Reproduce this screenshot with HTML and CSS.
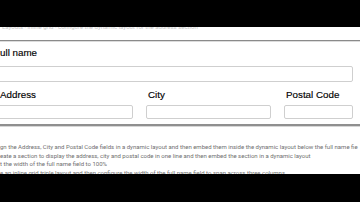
FILE: index.html
```html
<!DOCTYPE html>
<html lang="en">
<head>
  <meta charset="UTF-8">
  <meta name="viewport" content="width=device-width, initial-scale=1.0">
  <title>Dynamic layout</title>
  <link rel="stylesheet" href="styles.css">
</head>
<body>
  <div class="topbar"></div>
  <div class="crumb"><span>Layouts &middot; inline grid &middot; configure the dynamic layout for the address section</span></div>

  <div class="panel">
    <div class="field">
      <label class="label">ull name</label>
      <div class="input input-wide"></div>
    </div>

    <div class="triple">
      <div class="field">
        <label class="label">Address</label>
        <div class="input"></div>
      </div>
      <div class="field">
        <label class="label">City</label>
        <div class="input"></div>
      </div>
      <div class="field">
        <label class="label">Postal Code</label>
        <div class="input"></div>
      </div>
    </div>
  </div>

  <div class="notes">
    <p>gn the Address, City and Postal Code fields in a dynamic layout and then embed them inside the dynamic layout below the full name fie</p>
    <p>eate a section to display the address, city and postal code in one line and then embed the section in a dynamic layout</p>
    <p>t the width of the full name field to 100%</p>
    <p>e an inline grid triple layout and then configure the width of the full name field to span across three columns</p>
  </div>

  <div class="bottombar"></div>
</body>
</html>
```

FILE: styles.css
```css
* {
  box-sizing: border-box;
}

html, body {
  margin: 0;
  width: 360px;
  height: 202px;
  overflow: hidden;
  background: #fff;
}

body {
  display: flex;
  flex-direction: column;
  font-family: "Liberation Sans", Arial, sans-serif;
  color: #111;
}

.topbar {
  flex-shrink: 0;
  height: 27px;
  background: #000;
}

.crumb {
  flex-shrink: 0;
  height: 5px;
  overflow: hidden;
  padding-left: 2px;
}

.crumb span {
  display: block;
  margin-top: -4px;
  font-family: Roboto, sans-serif;
  font-size: 6px;
  line-height: 8px;
  color: #c8c8c8;
  white-space: nowrap;
}

.panel {
  flex-shrink: 0;
  margin-top: 8px;
  border-top: 1px solid #8a8a8a;
  border-bottom: 2px solid #8f8f8f;
  box-shadow: 0 1px 0 #d6d6d6, inset 0 1px 0 #dcdcdc;
  padding: 6px 0 5px;
}

.label {
  display: block;
  font-size: 9.8px;
  line-height: 12px;
  color: #000;
  white-space: nowrap;
  -webkit-text-stroke: 0.15px #000;
}

.input {
  height: 15px;
  border: 1px solid #cfcfcf;
  border-radius: 2px;
  background: #fff;
}

.input-wide {
  margin-top: 7px;
  margin-left: -4px;
  width: 357px;
  height: 16px;
}

.triple {
  display: grid;
  grid-template-columns: 133px 125px 69px;
  column-gap: 13px;
  margin-top: 7px;
}

.triple .label {
  margin-bottom: 4px;
}

.triple .field:first-child .input {
  margin-left: -4px;
}

.triple .field:nth-child(2) .label,
.triple .field:nth-child(3) .label {
  padding-left: 2px;
}

.triple .input {
  height: 14px;
}

.notes {
  flex: 1;
  min-height: 0;
  overflow: hidden;
  padding-top: 17px;
  font-family: Roboto, sans-serif;
  font-size: 6px;
  color: #6f6f6f;
}

.notes p {
  margin: 0;
  line-height: 8.7px;
  white-space: nowrap;
}

.bottombar {
  flex-shrink: 0;
  height: 28px;
  background: #000;
}
```
